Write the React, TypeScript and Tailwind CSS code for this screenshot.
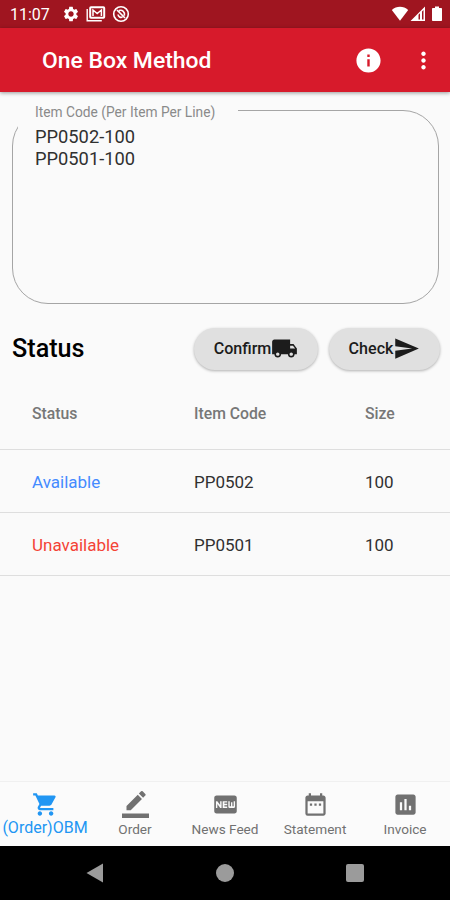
import type { ReactNode } from "react";
import {
  MdAssessment,
  MdDateRange,
  MdFiberNew,
  MdInfo,
  MdLocalShipping,
  MdMoreVert,
  MdSend,
  MdSettings,
  MdShoppingCart,
} from "react-icons/md";

const rows = [
  { status: "Available", color: "text-[#448aff]", code: "PP0502", size: "100" },
  { status: "Unavailable", color: "text-[#f44336]", code: "PP0501", size: "100" },
];

function BorderColorIcon() {
  return (
    <svg viewBox="0 0 24 24" className="size-[27px]" fill="currentColor">
      <path d="M17.75 7L14 3.25l-10 10V17h3.75l10-10zm2.96-2.96a1 1 0 0 0 0-1.41L18.37.29a1 1 0 0 0-1.41 0L15 2.25 18.75 6l1.96-1.96z" />
      <path d="M0 20h24v4H0z" />
    </svg>
  );
}

function StatusBar() {
  return (
    <div className="flex h-7 shrink-0 items-center bg-[#9f1520] pl-[10px] pr-[8px] text-white">
      <span className="w-[52px] pt-[2px] text-[16px] leading-7">11:07</span>
      <MdSettings className="size-[18px]" />
      <svg viewBox="0 0 20 16" className="ml-[6px] h-4 w-5" fill="none" stroke="currentColor">
        <path d="M1.2 3v11.8h14.6" strokeWidth="1.4" />
        <rect x="4.2" y="1.2" width="14" height="10.6" rx="0.8" strokeWidth="2" />
        <path d="M7 10V4l4.200 3.500L15.400 4v6" strokeWidth="1.5" />
      </svg>
      <svg viewBox="0 0 18 18" className="ml-[6px] size-[18px]" fill="none" stroke="currentColor">
        <circle cx="9" cy="9" r="7.3" strokeWidth="1.6" />
        <path d="M5 5l8 8M6 9.5a3.2 3.2 0 0 0 4.5 2.5M7 5.6a4 4 0 0 1 5.3 5" strokeWidth="1.7" />
      </svg>
      <svg viewBox="0 0 18 16" className="ml-auto h-4 w-[18px]" fill="currentColor">
        <path d="M.8 4C5.5-.2 12.500-.2 17.200 4L9 14.800z" />
      </svg>
      <svg viewBox="0 0 16 16" className="ml-px size-4" fill="currentColor">
        <path fillRule="evenodd" d="M.5 15L15 .5V15zM8.500 13.500h1.500V7.300L8.500 8.800zm3.500 0h1.500V4L12 5.500z" />
      </svg>
      <svg viewBox="0 0 10 16" className="ml-[6px] h-4 w-[10px]" fill="currentColor">
        <path d="M3 .5h4V2h2.200q.8 0 .8.8V14.200q0 .8-.8.8H.8q-.8 0-.8-.8V2.800Q0 2 .8 2H3z" />
      </svg>
    </div>
  );
}

function NavItem({ icon, label, active }: { icon: ReactNode; label: string; active?: boolean }) {
  return (
    <div
      className={
        active
          ? "flex w-[90px] flex-col items-center pt-[9px] text-[#2196f3]"
          : "flex w-[90px] flex-col items-center pt-[9px] text-[#717171]"
      }
    >
      {icon}
      <span
        className={
          active
            ? "text-[16px] leading-5 whitespace-nowrap"
            : "mt-px text-[13.600px] leading-5 whitespace-nowrap"
        }
      >
        {label}
      </span>
    </div>
  );
}

export default function App() {
  return (
    <div className="flex h-[900px] w-[450px] flex-col overflow-hidden bg-[#fafafa] font-[Roboto,sans-serif]">
      <StatusBar />
      <header className="z-10 flex h-16 shrink-0 items-center bg-[#d71a2b] pl-[42px] pr-[13px] text-white shadow-[0_1px_4px_rgba(0,0,0,0.4)]">
        <h1 className="pt-[3px] text-[22.900px] font-medium">One Box Method</h1>
        <MdInfo className="ml-auto size-[29px]" />
        <MdMoreVert className="ml-[27px] size-[27px]" />
      </header>

      <main className="flex flex-1 flex-col">
        <div className="relative mx-3 mt-[18px] h-[194px] w-[427px] rounded-[36px] border border-[#a5a5a5] pt-[15px] pl-[22px]">
          <label className="absolute -top-[9px] left-[5px] h-[26px] w-[220px] bg-[#fafafa] pl-[17px] text-[13.750px] leading-5 text-[#8a8a8a]">
            Item Code (Per Item Per Line)
          </label>
          <p className="relative text-[18.300px] leading-[22px] text-[#303030]">
            PP0502-100
            <br />
            PP0501-100
          </p>
        </div>

        <div className="mt-[23px] flex h-[43px] items-center pr-[10px] pl-3">
          <h2 className="pt-px text-[25.200px] font-medium text-black">Status</h2>
          <button className="ml-auto flex h-[42px] w-[124px] items-center justify-center rounded-full bg-[#e0e0e0] text-[16.100px] font-medium text-[#1c1c1c] shadow-[0_1px_3px_rgba(0,0,0,0.3)]">
            <span className="pt-[2px]">Confirm</span>
            <MdLocalShipping className="size-[27px]" />
          </button>
          <button className="ml-[11px] flex h-[42px] w-[111px] items-center justify-center rounded-full bg-[#e0e0e0] text-[16.100px] font-medium text-[#1c1c1c] shadow-[0_1px_3px_rgba(0,0,0,0.3)]">
            <span className="pt-[2px]">Check</span>
            <MdSend className="size-[27px]" />
          </button>
        </div>

        <div className="mt-[6px]">
          <div className="grid h-[74px] grid-cols-[162px_171px_1fr] items-center border-b border-[#dedede] pt-[2px] pl-8 text-[15.750px] font-medium text-[#777777]">
            <span>Status</span>
            <span>Item Code</span>
            <span>Size</span>
          </div>
          {rows.map((row) => (
            <div
              key={row.code}
              className="grid h-[63px] grid-cols-[162px_171px_1fr] items-center border-b border-[#dedede] pt-[3px] pl-8 text-[17px] text-[#303030]"
            >
              <span className={row.color}>{row.status}</span>
              <span>{row.code}</span>
              <span>{row.size}</span>
            </div>
          ))}
        </div>
      </main>

      <nav className="flex h-[65px] shrink-0 border-t border-[#f0f0f0] bg-[#fbfbfb]">
        <NavItem icon={<MdShoppingCart className="size-[27px]" />} label="(Order)OBM" active />
        <NavItem icon={<BorderColorIcon />} label="Order" />
        <NavItem icon={<MdFiberNew className="size-[27px]" />} label="News Feed" />
        <NavItem icon={<MdDateRange className="size-[27px]" />} label="Statement" />
        <NavItem icon={<MdAssessment className="size-[27px]" />} label="Invoice" />
      </nav>

      <div className="flex h-[54px] shrink-0 items-center justify-between bg-black px-[86px] text-[#9b9b9b]">
        <svg viewBox="0 0 18 20" className="h-5 w-[18px]" fill="currentColor">
          <path d="M17 .5v19L.5 10z" />
        </svg>
        <span className="size-[18px] rounded-full bg-[#9b9b9b]" />
        <span className="size-[18px] rounded-[2px] bg-[#9b9b9b]" />
      </div>
    </div>
  );
}
